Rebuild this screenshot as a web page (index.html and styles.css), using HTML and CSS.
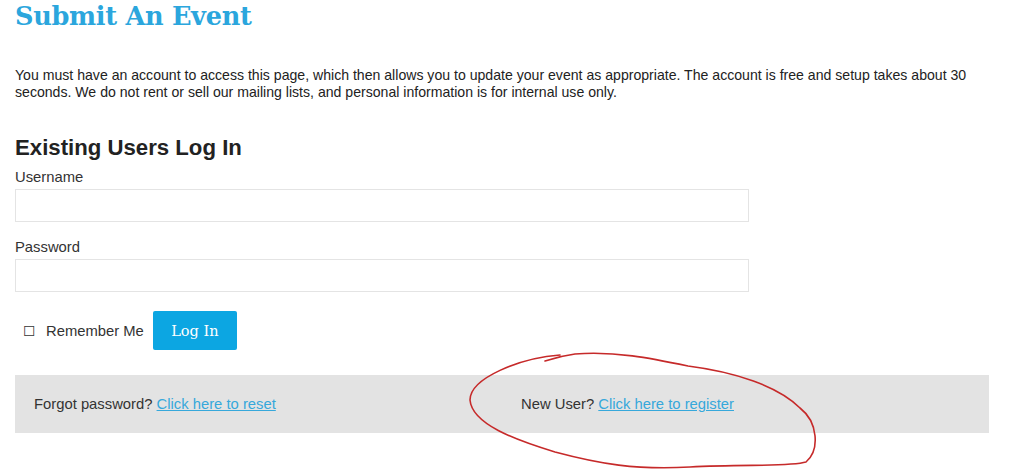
FILE: index.html
```html
<!DOCTYPE html>
<html>
<head>
<meta charset="utf-8">
<link rel="stylesheet" href="styles.css">
</head>
<body>
<div class="page">
  <h1 class="title">Submit An Event</h1>
  <p class="intro">You must have an account to access this page, which then allows you to update your event as appropriate. The account is free and setup takes about 30 seconds. We do not rent or sell our mailing lists, and personal information is for internal use only.</p>
  <h2 class="subtitle">Existing Users Log In</h2>
  <form class="login">
    <label class="field-label">Username</label>
    <div class="input"></div>
    <label class="field-label pw">Password</label>
    <div class="input"></div>
    <div class="actions">
      <span class="check">&#9744;</span>
      <span class="remember">Remember Me</span>
      <span class="btn">Log In</span>
    </div>
  </form>
  <div class="links">
    <div class="link-col">Forgot password? <a href="#">Click here to reset</a></div>
    <div class="link-col">New User? <a href="#">Click here to register</a></div>
  </div>
</div>
<svg class="scribble" width="1024" height="472" viewBox="0 0 1024 472">
  <path d="M 560 355 C 520 358, 470 378, 470 400 C 472 424, 515 440, 555 452 C 600 464, 635 470, 690 467 C 745 464, 790 467, 806 462 C 820 450, 818 422, 800 408 C 778 386, 735 372, 688 366 C 650 358, 615 351, 575 354 C 560 356, 548 360, 545 361" fill="none" stroke="#c62a2a" stroke-width="1.6" stroke-linecap="round"/>
</svg>
</body>
</html>
```

FILE: styles.css
```css
html, body {
  margin: 0;
  padding: 0;
  background: #ffffff;
}
body {
  font-family: "Liberation Sans", Arial, sans-serif;
  color: #222222;
  position: relative;
  width: 1024px;
  height: 472px;
  overflow: hidden;
}
.page {
  padding: 0 35px 0 15px;
}
.title {
  margin: 0;
  padding-top: 1px;
  font-family: "DejaVu Serif", serif;
  font-weight: bold;
  font-size: 25.6px;
  line-height: 30px;
  color: #2ba6dd;
  letter-spacing: -0.3px;
}
.intro {
  margin: 36px 0 0 0;
  font-size: 14.1px;
  line-height: 17px;
  color: #222;
}
.subtitle {
  margin: 34px 0 0 0;
  font-size: 22.2px;
  line-height: 26px;
  font-weight: bold;
  color: #222;
}
.login {
  display: flex;
  flex-direction: column;
  align-items: flex-start;
}
.field-label {
  display: block;
  font-size: 14.8px;
  line-height: 16px;
  color: #333;
  margin-top: 8px;
}
.field-label.pw {
  margin-top: 17px;
}
.input {
  width: 732px;
  height: 31px;
  border: 1px solid #e4e4e4;
  margin-top: 4px;
  background: #fff;
}
.actions {
  display: flex;
  align-items: center;
  margin-top: 19px;
  padding-left: 8px;
}
.check {
  font-size: 14px;
  color: #333;
  font-family: "DejaVu Sans", sans-serif;
  width: 23px;
}
.remember {
  font-size: 14.8px;
  color: #333;
}
.btn {
  margin-left: 9px;
  width: 84px;
  height: 39px;
  display: flex;
  align-items: center;
  justify-content: center;
  background: #0ca6e2;
  color: #fff;
  border-radius: 2px;
  font-family: "DejaVu Serif", serif;
  font-size: 14.5px;
}
.links {
  margin-top: 25px;
  background: #e3e3e3;
  height: 58px;
  display: flex;
  align-items: center;
  width: 974px;
}
.link-col {
  flex: 1;
  padding-left: 19px;
  font-size: 14.8px;
  color: #333;
}
.link-col a {
  color: #36a8db;
  text-decoration: underline;
}
.scribble {
  position: absolute;
  left: 0;
  top: 0;
  pointer-events: none;
}
```
